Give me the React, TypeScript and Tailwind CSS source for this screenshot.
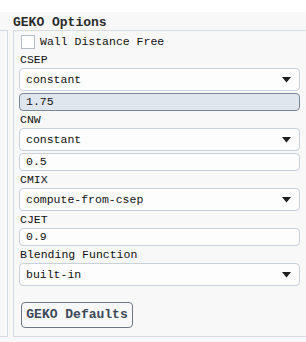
import React from "react";

const mono = { fontFamily: '"Liberation Mono", "DejaVu Sans Mono", monospace' };

function Arrow() {
  return (
    <svg width="9" height="6" viewBox="0 0 9 6" className="shrink-0">
      <path d="M0 0 H9 L4.5 5.5 Z" fill="#1f1f1f" />
    </svg>
  );
}

function Select({ value }: { value: string }) {
  return (
    <div className="h-[23px] flex items-center justify-between rounded-[4px] border border-[#c9d1db] bg-[#fdfdfd] pl-[6px] pr-[8px] text-[11.5px] text-[#111]">
      <span>{value}</span>
      <Arrow />
    </div>
  );
}

function Input({ value, active }: { value: string; active?: boolean }) {
  return (
    <div
      className={
        "h-[18px] flex items-center rounded-[4px] border pl-[6px] text-[11.5px] text-[#111] " +
        (active ? "border-[#7b8797] bg-[#dfe6ee]" : "border-[#c9d1db] bg-[#fdfdfd]")
      }
    >
      <span>{value}</span>
    </div>
  );
}

function Label({ text }: { text: string }) {
  return (
    <div className="h-[17px] flex items-center text-[11.5px] text-[#111] pl-[1px]">{text}</div>
  );
}

export default function App() {
  return (
    <div className="w-[306px] h-[342px] bg-white flex flex-col overflow-hidden" style={mono}>
      <div className="h-[12px] bg-white" />
      <div className="flex-1 bg-[#f8f8f8] flex">
        <div className="w-[8px] flex flex-col">
          <div className="h-[18px]" />
          <div className="flex-1 border-t border-r border-b border-[#d5dce5] mb-[5px]" />
        </div>
        <div className="flex-1 ml-[5px] flex flex-col">
          <div className="h-[18px] flex items-end pb-[1px] text-[13px] leading-[13px] font-bold text-[#2a2a2a]">GEKO Options</div>
          <div className="flex-1 border-l border-t border-b border-[#d5dce5] mb-[5px] pl-[5px] pr-[6px] pt-[2px] flex flex-col">
            <div className="h-[18px] flex items-center">
              <div className="ml-[2px] w-[14px] h-[14px] border border-[#b5bdc7] bg-white" />
              <span className="ml-[5px] text-[11.5px] text-[#111]">Wall Distance Free</span>
            </div>
            <Label text="CSEP" />
            <Select value="constant" />
            <div className="h-[2px]" />
            <Input value="1.75" active />
            <Label text="CNW" />
            <Select value="constant" />
            <div className="h-[2px]" />
            <Input value="0.5" />
            <Label text="CMIX" />
            <Select value="compute-from-csep" />
            <Label text="CJET" />
            <Input value="0.9" />
            <Label text="Blending Function" />
            <Select value="built-in" />
            <div className="h-[16px]" />
            <div className="ml-[2px] w-[112px] h-[26px] flex items-center justify-center rounded-[4px] border-[1.5px] border-[#6f7986] text-[13px] font-bold text-[#3d4958]">
              GEKO Defaults
            </div>
          </div>
        </div>
      </div>
    </div>
  );
}
